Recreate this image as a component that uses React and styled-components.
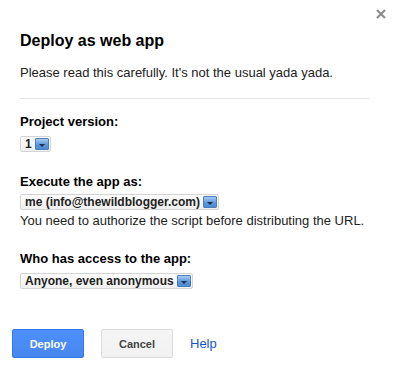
import React from 'react';
import styled, { createGlobalStyle } from 'styled-components';

const Global = createGlobalStyle`
  html, body {
    margin: 0;
    padding: 0;
    background: #fff;
  }
  body {
    font-family: "Liberation Sans", Arial, sans-serif;
    color: #222;
  }
`;

const Dialog = styled.div`
  position: relative;
  width: 350px;
  padding: 31px 37px 12px 20px;
  background: #fff;
`;

const Close = styled.button`
  position: absolute;
  top: 8px;
  right: 20px;
  width: 12px;
  height: 12px;
  padding: 0;
  border: none;
  background: none;
  cursor: pointer;
`;

const Title = styled.h1`
  margin: 0;
  font-size: 16px;
  line-height: 20px;
  font-weight: bold;
  color: #000;
`;

const Intro = styled.p`
  margin: 14px 0 0;
  font-size: 13px;
  line-height: 16px;
  color: #222;
  padding-bottom: 17px;
  border-bottom: 1px solid #e5e5e5;
`;

const Field = styled.div`
  display: flex;
  flex-direction: column;
  align-items: flex-start;
  margin-top: ${(p) => p.$top}px;
`;

const Label = styled.div`
  font-size: 13px;
  line-height: 16px;
  font-weight: bold;
  color: #000;
  margin-bottom: ${(p) => p.$gap}px;
`;

const Select = styled.div`
  display: flex;
  align-items: center;
  height: 14px;
  padding-left: 4px;
  border: 1px solid #d4d4d4;
  border-radius: 2px;
  background: linear-gradient(#fdfdfd, #f0f0f0);
  font-size: 12px;
  font-weight: bold;
  color: #222;
  line-height: 14px;
`;

const SelectText = styled.span`
  padding-right: 3px;
  white-space: nowrap;
`;

const Arrow = styled.span`
  display: flex;
  align-items: center;
  justify-content: center;
  width: 14px;
  height: 12px;
  margin-right: 1px;
  border: 1px solid #4a7fbf;
  border-radius: 1px;
  background: linear-gradient(#a9cbf2, #5d98dc 55%, #4f8bd3);
  box-sizing: border-box;

  &::after {
    content: '';
    border-left: 3px solid transparent;
    border-right: 3px solid transparent;
    border-top: 3px solid #1c2f4a;
    margin-top: 2px;
  }
`;

const Note = styled.div`
  margin-top: 3px;
  font-size: 13px;
  line-height: 16px;
  color: #222;
`;

const Actions = styled.div`
  display: flex;
  align-items: center;
  gap: 17px;
  margin: 40px 0 0 -8px;
`;

const Button = styled.button`
  width: 72px;
  height: 29px;
  box-sizing: border-box;
  border-radius: 2px;
  border: 1px solid ${(p) => (p.$primary ? '#3079ed' : '#dcdcdc')};
  background: ${(p) => (p.$primary ? 'linear-gradient(#4d90fe, #4787ed)' : 'linear-gradient(#f5f5f5, #f1f1f1)')};
  color: ${(p) => (p.$primary ? '#fff' : '#444')};
  font-family: "Liberation Sans", Arial, sans-serif;
  font-size: 11px;
  font-weight: bold;
  padding: 0;
  cursor: pointer;
`;

const HelpLink = styled.a`
  font-size: 13px;
  color: #15c;
  text-decoration: none;
`;

const Dropdown = ({ children }) => (
  <Select>
    <SelectText>{children}</SelectText>
    <Arrow />
  </Select>
);

export default function App() {
  return (
    <>
      <Global />
      <Dialog>
        <Close aria-label="Close">
          <svg width="12" height="12" viewBox="0 0 12 12">
            <path d="M2 2 L10 10 M10 2 L2 10" stroke="#8c8c8c" strokeWidth="2.2" />
          </svg>
        </Close>
        <Title>Deploy as web app</Title>
        <Intro>Please read this carefully. It's not the usual yada yada.</Intro>

        <Field $top={15}>
          <Label $gap={6}>Project version:</Label>
          <Dropdown>1</Dropdown>
        </Field>

        <Field $top={22}>
          <Label $gap={4}>Execute the app as:</Label>
          <Dropdown>me (info@thewildblogger.com)</Dropdown>
          <Note>You need to authorize the script before distributing the URL.</Note>
        </Field>

        <Field $top={22}>
          <Label $gap={6}>Who has access to the app:</Label>
          <Dropdown>Anyone, even anonymous</Dropdown>
        </Field>

        <Actions>
          <Button $primary>Deploy</Button>
          <Button>Cancel</Button>
          <HelpLink href="#">Help</HelpLink>
        </Actions>
      </Dialog>
    </>
  );
}
